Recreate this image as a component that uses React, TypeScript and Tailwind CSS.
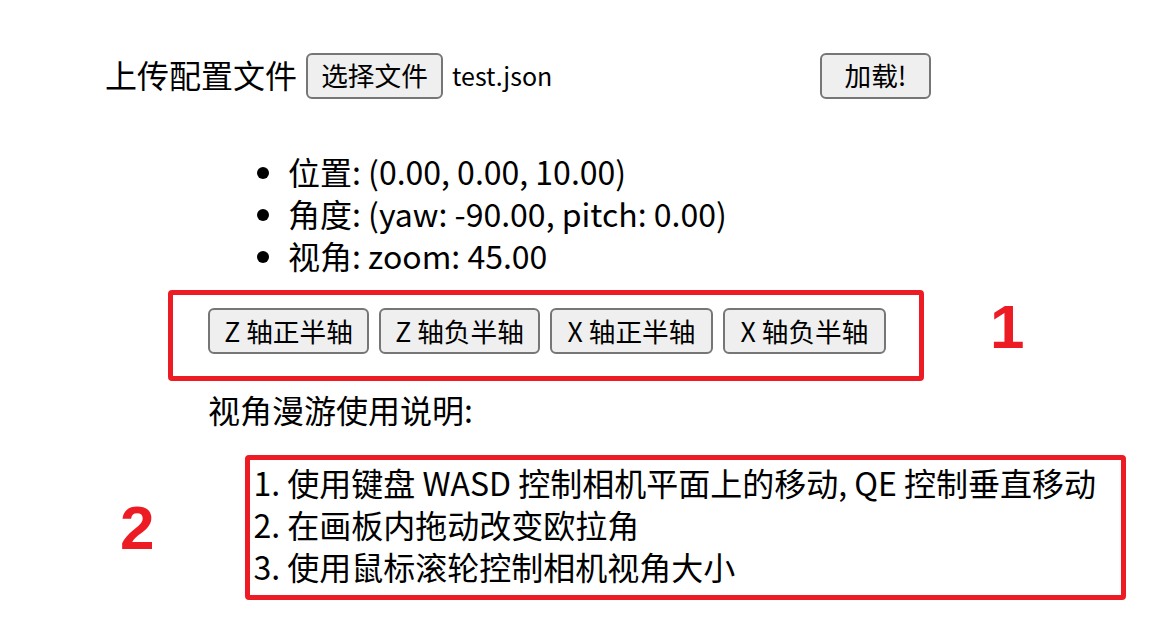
const btn =
  'h-[46px] rounded-[6px] border-2 border-[#767676] bg-[#efefef] text-[26.67px] leading-none text-black flex items-center justify-center'

const axisButtons = [
  { label: 'Z 轴正半轴', w: 'w-[161px]' },
  { label: 'Z 轴负半轴', w: 'w-[161px]' },
  { label: 'X 轴正半轴', w: 'w-[163px]' },
  { label: 'X 轴负半轴', w: 'w-[163px]' },
]

const tips = [
  '1. 使用键盘 WASD 控制相机平面上的移动, QE 控制垂直移动',
  '2. 在画板内拖动改变欧拉角',
  '3. 使用鼠标滚轮控制相机视角大小',
]

export default function App() {
  return (
    <div className="min-h-screen w-[1158px] bg-white pt-[53px] text-black text-[32px] font-['Noto_Sans_CJK_SC',sans-serif]">
      {/* upload row */}
      <div className="flex h-[45px] items-center pl-[105px]">
        <span className="leading-none -mt-[3px]">上传配置文件</span>
        <div className="ml-[9px] flex w-[505px] items-center">
          <button className={`${btn} w-[137px] h-[45px]`}>选择文件</button>
          <span className="ml-[9px] text-[25px] leading-none">test.json</span>
        </div>
        <button className={`${btn} ml-[9px] w-[111px] h-[45px]`}>加载!</button>
      </div>

      {/* camera state */}
      <ul className="mt-[52px] ml-[288px] list-disc leading-[42px]">
        <li>位置: (0.00, 0.00, 10.00)</li>
        <li>角度: (yaw: -90.00, pitch: 0.00)</li>
        <li>视角: zoom: 45.00</li>
      </ul>

      {/* axis buttons */}
      <div className="mt-[14px] flex items-center">
        <div className="ml-[168px] flex h-[91px] w-[756px] gap-[10px] rounded-[4px] border-[5px] border-[#ed1c24] pl-[35px] pt-[13px]">
          {axisButtons.map(b => (
            <button key={b.label} className={`${btn} ${b.w}`}>
              {b.label}
            </button>
          ))}
        </div>
        <span className="ml-[66px] mb-[18px] text-[62px] font-bold leading-none text-[#ed1c24] font-['Liberation_Sans',sans-serif]">
          1
        </span>
      </div>

      <div className="mt-[7px] ml-[208px] leading-[42px]">视角漫游使用说明:</div>

      {/* usage tips */}
      <div className="mt-[25px] flex items-center">
        <span className="ml-[120px] text-[62px] font-bold leading-none text-[#ed1c24] font-['Liberation_Sans',sans-serif]">
          2
        </span>
        <div className="ml-[91px] h-[145px] w-[881px] rounded-[4px] border-[5px] border-[#ed1c24] pl-[3px] pt-[1px] leading-[42px]">
          {tips.map(t => (
            <div key={t}>{t}</div>
          ))}
        </div>
      </div>
    </div>
  )
}
